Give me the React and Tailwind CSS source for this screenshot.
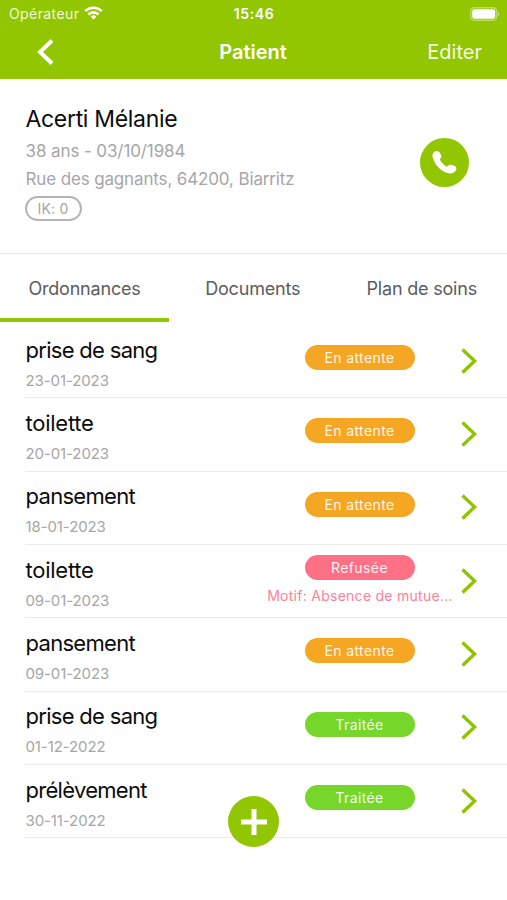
import { useState } from "react";
import clsx from "clsx";

const tabs = ["Ordonnances", "Documents", "Plan de soins"];

const prescriptions = [
  { id: 1, title: "prise de sang", date: "23-01-2023", status: "pending" },
  { id: 2, title: "toilette", date: "20-01-2023", status: "pending" },
  { id: 3, title: "pansement", date: "18-01-2023", status: "pending" },
  { id: 4, title: "toilette", date: "09-01-2023", status: "refused", reason: "Motif: Absence de mutue..." },
  { id: 5, title: "pansement", date: "09-01-2023", status: "pending" },
  { id: 6, title: "prise de sang", date: "01-12-2022", status: "done" },
  { id: 7, title: "prélèvement", date: "30-11-2022", status: "done" },
];

const statuses = {
  pending: { label: "En attente", color: "bg-[#f5a623]" },
  refused: { label: "Refusée", color: "bg-[#ff7085]" },
  done: { label: "Traitée", color: "bg-[#77d62a]" },
};

const StatusBar = () => (
  <div className="grid h-7 grid-cols-3 items-center pl-[9px] pr-[6px]">
    <div className="flex items-center gap-[5px]">
      <span className="text-[14px] leading-5 tracking-[0.4px] text-white/85">Opérateur</span>
      <svg width="19" height="14" viewBox="0 0 19 14" fill="none" stroke="white" strokeWidth="2.6" className="-mt-[2px]">
        <path d="M1.2 5.2a11.8 11.8 0 0 1 16.6 0" />
        <path d="M4.4 8.5a7.2 7.2 0 0 1 10.2 0" />
        <path d="M9.5 13.6 6.6 10.7a4.1 4.1 0 0 1 5.8 0z" fill="white" stroke="none" />
      </svg>
    </div>
    <span className="-ml-[2px] text-center text-[14px] font-semibold leading-5 tracking-[0.6px]">15:46</span>
    <svg width="31" height="14" viewBox="0 0 31 14" className="-mt-[1px] justify-self-end">
      <rect x="0.7" y="0.7" width="26" height="12.6" rx="3.8" fill="none" stroke="white" strokeOpacity="0.4" strokeWidth="1.4" />
      <rect x="2.2" y="2.2" width="23" height="9.6" rx="2.2" fill="white" />
      <path d="M28 5v4c1.6-.5 1.6-3.5 0-4z" fill="white" fillOpacity="0.5" />
    </svg>
  </div>
);

const Row = ({ item }) => {
  const status = statuses[item.status];

  return (
    <li className="flex h-[73.33px] border-b border-[#ebebeb]">
      <div className="flex-1 pl-[0.5px] pt-[10.5px]">
        <div className={clsx("text-[22px] leading-7 text-[#0c0c0c]", item.title === "toilette" ? "tracking-[-0.25px]" : "tracking-[-0.7px]")}>
          {item.title}
        </div>
        <div className="mt-[7px] text-[15px] leading-5 tracking-[-0.1px] text-[#a6a6a6]">{item.date}</div>
      </div>
      <div className={clsx("flex w-[186px] flex-col items-center", item.reason ? "pt-[10px]" : "pt-[19.8px]")}>
        <span className={clsx("h-[25px] w-[110px] rounded-full pr-[1px] text-center text-[14px] leading-[25px] tracking-[0.4px] text-white/90", status.color)}>
          {status.label}
        </span>
        {item.reason && (
          <span className="mt-[6px] whitespace-nowrap text-[14px] leading-5 tracking-[0.27px] text-[#ff7f94]">{item.reason}</span>
        )}
      </div>
      <button className="ml-[8px] mr-[29px] mt-[22.5px] h-[26px] w-[17px]" aria-label="Ouvrir">
        <svg width="17" height="26" viewBox="0 0 17 26" fill="none" stroke="#90c400" strokeWidth="3.4">
          <path d="M1.5 1.5 13.6 13 1.5 24.5" />
        </svg>
      </button>
    </li>
  );
};

export default function App() {
  const [activeTab, setActiveTab] = useState(0);

  return (
    <div className="relative h-[900px] w-[507px] overflow-hidden bg-white font-['Inter',sans-serif]">
      <header className="h-[79px] bg-[#92c600] text-white">
        <StatusBar />
        <div className="grid h-12 grid-cols-3 items-center pl-[37px] pr-[25px]">
          <button aria-label="Retour">
            <svg width="17" height="26" viewBox="0 0 17 26" fill="none" stroke="white" strokeWidth="4">
              <path d="M15 1.5 3 13l12 11.5" />
            </svg>
          </button>
          <h1 className="-ml-[13px] text-center text-[20px] font-semibold leading-6">Patient</h1>
          <button className="text-right text-[20px] leading-6 text-white/90">Editer</button>
        </div>
      </header>

      <section className="flex h-[175px] justify-between border-b border-[#e6e6e6] pl-[25px] pr-[38px]">
        <div className="pt-[26px]">
          <h2 className="pl-[0.5px] text-[23px] leading-7 tracking-[-0.32px] text-[#0c0c0c]">Acerti Mélanie</h2>
          <p className="mt-[6px] pl-[0.5px] text-[17px] leading-6 tracking-[-0.1px] text-[#a6a6a6]">38 ans - 03/10/1984</p>
          <p className="mt-[4px] pl-[0.5px] text-[17px] leading-6 tracking-[-0.14px] text-[#a6a6a6]">Rue des gagnants, 64200, Biarritz</p>
          <div className="mt-[5px] h-[25px] w-[57px] rounded-full border-2 border-[#b4b4b4] pr-[1px] text-center text-[14px] leading-[21px] tracking-[0.2px] text-[#a6a6a6]">
            IK: 0
          </div>
        </div>
        <button className="mt-[58.5px] flex size-[49px] items-center justify-center rounded-full bg-[#92c600]" aria-label="Appeler">
          <svg width="25" height="25" viewBox="0 0 25 25" fill="white">
            <path d="M2.2 1.9C3.9.5 6.400.7 7.700 2.500L9 4.700c.9 1.600.5 2.800-.6 3.700-.6.5-.6 1.100-.2 1.800 1.300 2.400 3.300 4.500 5.800 6 .7.400 1.200.3 1.800-.3 1-1.100 2.400-1.400 4-1l2.500.8c2.200.8 2.700 3 1.500 4.800-1.500 2.300-4.200 3.400-7.200 2.800C9.700 21.900 2.700 15 .7 7.500.1 5.100.6 3.100 2.200 1.900z" />
          </svg>
        </button>
      </section>

      <nav className="grid h-[68px] grid-cols-3">
        {tabs.map((tab, i) => (
          <button
            key={tab}
            onClick={() => setActiveTab(i)}
            className={clsx(
              "border-b-4 pt-[6px] text-[18px] leading-6 tracking-[-0.2px] text-[#5c5c5c]",
              i > 0 && "pr-[1.5px]",
              activeTab === i ? "border-[#92c600]" : "border-transparent"
            )}
          >
            {tab}
          </button>
        ))}
      </nav>

      <ul className="mt-[3.1px] pl-[25px]">
        {prescriptions.map((item) => (
          <Row key={item.id} item={item} />
        ))}
      </ul>

      {/* floating add button */}
      <button className="absolute left-[228.3px] top-[796.4px] flex size-[51px] items-center justify-center rounded-full bg-[#92c600]" aria-label="Ajouter">
        <svg width="26" height="26" viewBox="0 0 26 26" stroke="white" strokeWidth="5">
          <path d="M13 0v26M0 13h26" />
        </svg>
      </button>
    </div>
  );
}
